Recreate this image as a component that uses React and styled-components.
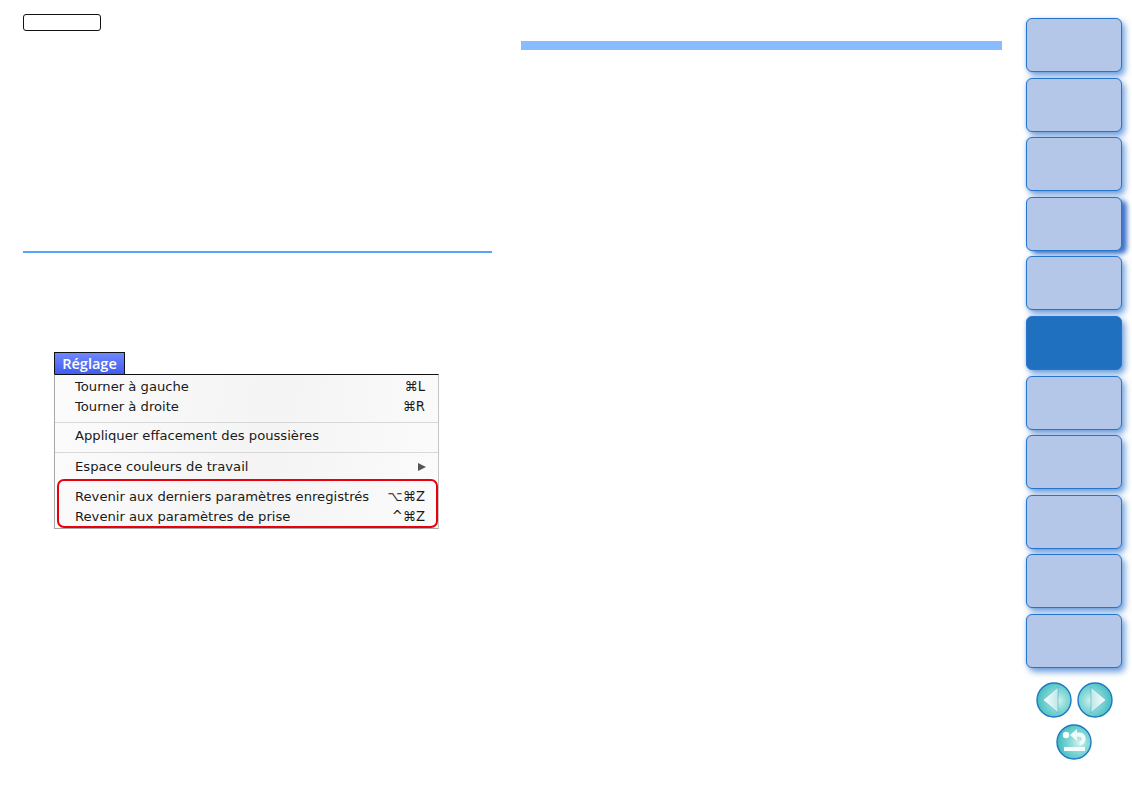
import React from "react";
import styled, { createGlobalStyle } from "styled-components";

const GlobalStyle = createGlobalStyle`
    html, body {
        margin: 0;
        padding: 0;
        background: #ffffff;
        overflow: hidden;
    }
`;

const Page = styled.div`
    display: flex;
    width: 1132px;
    height: 800px;
    background: #ffffff;
`;

const LeftColumn = styled.div`
    display: flex;
    flex-direction: column;
    width: 469px;
    margin-left: 23px;
    padding-top: 14px;
`;

const Badge = styled.div`
    width: 78px;
    height: 17px;
    box-sizing: border-box;
    border: 1.5px solid #111111;
    border-radius: 3px;
`;

const SectionRule = styled.div`
    height: 2px;
    margin-top: 220px;
    background: #55a5f8;
`;

const MenuShot = styled.div`
    display: flex;
    flex-direction: column;
    width: 385px;
    margin: 99px 0 0 31px;
    font-family: "DejaVu Sans", "Open Sans", sans-serif;
    font-size: 13.15px;
    color: #1a1a1a;
`;

const MenuTitle = styled.div`
    display: flex;
    align-items: center;
    justify-content: center;
    box-sizing: border-box;
    width: 71px;
    height: 22px;
    padding-bottom: 1px;
    border: 1px solid #111111;
    border-bottom: none;
    background: linear-gradient(#6f88fb, #3f5cf0);
    color: #ffffff;
    font-size: 14.5px;
    font-weight: 600;
    font-family: "Open Sans", sans-serif;
`;

const MenuPanel = styled.div`
    display: flex;
    flex-direction: column;
    box-sizing: border-box;
    height: 155px;
    border-top: 1px solid #111111;
    border-left: 1px solid #a8a8a8;
    border-right: 1px solid #c4c4c4;
    border-bottom: 1px solid #a8a8a8;
    background: linear-gradient(100deg, #fbfbfb, #f4f4f4 55%, #fbfbfb);
`;

const MenuGroup = styled.div`
    display: flex;
    flex-direction: column;
    box-sizing: border-box;
    height: ${props => props.$height}px;
    padding-top: ${props => props.$top}px;
    border-bottom: ${props => (props.$divider ? "1px solid #d8d8d8" : "none")};
`;

const MarkedGroup = styled.div`
    display: flex;
    flex-direction: column;
    box-sizing: border-box;
    height: 49px;
    margin-left: 2px;
    padding-top: 6px;
    border: 2px solid #e8000f;
    border-radius: 7px;
`;

const MenuRow = styled.div`
    display: flex;
    align-items: center;
    justify-content: space-between;
    height: 19.5px;
    padding: 0 ${props => (props.$marked ? "11px" : "13px")} 0 ${props => (props.$marked ? "16px" : "20px")};
    white-space: nowrap;
`;

const Shortcut = styled.span`
    font-family: "DejaVu Sans", sans-serif;
    font-size: 13.2px;
`;

const SubArrow = styled.span`
    width: 0;
    height: 0;
    margin-right: -1px;
    border-left: 8px solid #555555;
    border-top: 4.5px solid transparent;
    border-bottom: 4.5px solid transparent;
`;

const MiddleColumn = styled.div`
    width: 481px;
    margin-left: 29px;
    padding-top: 41px;
`;

const SectionBar = styled.div`
    height: 9px;
    background: #88bcff;
`;

const Sidebar = styled.nav`
    display: flex;
    flex-direction: column;
    align-items: center;
    width: 96px;
    margin-left: 24px;
    padding-top: 18px;
`;

const TabList = styled.div`
    display: flex;
    flex-direction: column;
    gap: 5.6px;
`;

const Tab = styled.div`
    box-sizing: border-box;
    width: 96px;
    height: 54px;
    border: 1px solid #2674cb;
    border-radius: 6px;
    background: ${props => (props.$active ? "#2070c0" : "#b5c7e9")};
    box-shadow: ${props =>
        props.$raised
            ? "5px 3px 5px rgba(40, 100, 195, 0.9), -1px 0 3px rgba(50, 120, 205, 0.2)"
            : "3px 4px 6px rgba(50, 120, 205, 0.7), -1px 0 3px rgba(50, 120, 205, 0.2)"};
`;

const NavRow = styled.div`
    display: flex;
    gap: 5px;
    margin-top: 14px;
`;

const ReturnRow = styled.div`
    display: flex;
    margin-top: 6px;
`;

const tabs = [
    {}, {}, {}, { raised: true }, {}, { active: true }, {}, {}, {}, {}, {},
];

function RoundButton({ id, cx, flip, children }) {
    return (
        <svg width="36" height="36" viewBox="0 0 36 36">
            <defs>
                <radialGradient id={id} cx={cx} cy="52%" r="62%">
                    <stop offset="0%" stopColor="#d6f2f0" />
                    <stop offset="40%" stopColor="#8ddcd8" />
                    <stop offset="100%" stopColor="#45bcc0" />
                </radialGradient>
                <linearGradient id={`${id}Mark`} x1={flip ? "1" : "0"} y1="0" x2={flip ? "0" : "1"} y2="0">
                    <stop offset="0%" stopColor="#f8fdfd" />
                    <stop offset="100%" stopColor="#bfe9e8" />
                </linearGradient>
            </defs>
            <circle cx="18" cy="18" r="17" fill={`url(#${id})`} stroke="#1f78c4" strokeWidth="1.4" />
            {children}
        </svg>
    );
}

export default function App() {
    return (
        <Page>
            <GlobalStyle />
            <LeftColumn>
                <Badge />
                <SectionRule />
                <MenuShot>
                    <MenuTitle>Réglage</MenuTitle>
                    <MenuPanel>
                        <MenuGroup $height={48} $top={2} $divider>
                            <MenuRow>
                                <span>Tourner à gauche</span>
                                <Shortcut>⌘L</Shortcut>
                            </MenuRow>
                            <MenuRow>
                                <span>Tourner à droite</span>
                                <Shortcut>⌘R</Shortcut>
                            </MenuRow>
                        </MenuGroup>
                        <MenuGroup $height={30} $top={3} $divider>
                            <MenuRow>
                                <span>Appliquer effacement des poussières</span>
                            </MenuRow>
                        </MenuGroup>
                        <MenuGroup $height={26} $top={4}>
                            <MenuRow>
                                <span>Espace couleurs de travail</span>
                                <SubArrow />
                            </MenuRow>
                        </MenuGroup>
                        <MarkedGroup>
                            <MenuRow $marked>
                                <span>Revenir aux derniers paramètres enregistrés</span>
                                <Shortcut>⌥⌘Z</Shortcut>
                            </MenuRow>
                            <MenuRow $marked>
                                <span>Revenir aux paramètres de prise</span>
                                <Shortcut>^⌘Z</Shortcut>
                            </MenuRow>
                        </MarkedGroup>
                    </MenuPanel>
                </MenuShot>
            </LeftColumn>
            <MiddleColumn>
                <SectionBar />
            </MiddleColumn>
            <Sidebar>
                <TabList>
                    {tabs.map((tab, i) => (
                        <Tab key={i} $active={tab.active} $raised={tab.raised} />
                    ))}
                </TabList>
                <NavRow>
                    <RoundButton id="navBack" cx="62%">
                        <path d="M22 5 L22 31 L7 18 Z" fill="url(#navBackMark)" stroke="#5aa8d0" strokeWidth="0.6" />
                    </RoundButton>
                    <RoundButton id="navNext" cx="38%" flip>
                        <path d="M14 5 L14 31 L29 18 Z" fill="url(#navNextMark)" stroke="#5aa8d0" strokeWidth="0.6" />
                    </RoundButton>
                </NavRow>
                <ReturnRow>
                    <RoundButton id="navReturn" cx="65%">
                        <circle cx="10" cy="11" r="3.2" fill="#f6fdfd" />
                        <path
                            d="M14 11 L21 5 V8.5 H23.5 C27.5 8.5 29.5 11.5 29.5 15 C29.5 18.5 27 21 23.5 21.5 V18 C25 17.2 25.8 16.2 25.8 15 C25.8 13.5 24.5 12.8 23 12.8 H21 V17 Z"
                            fill="#f0fbfb"
                        />
                        <path d="M8 23 H29 V27 H8 Z" fill="#f6fdfd" />
                    </RoundButton>
                </ReturnRow>
            </Sidebar>
        </Page>
    );
}
